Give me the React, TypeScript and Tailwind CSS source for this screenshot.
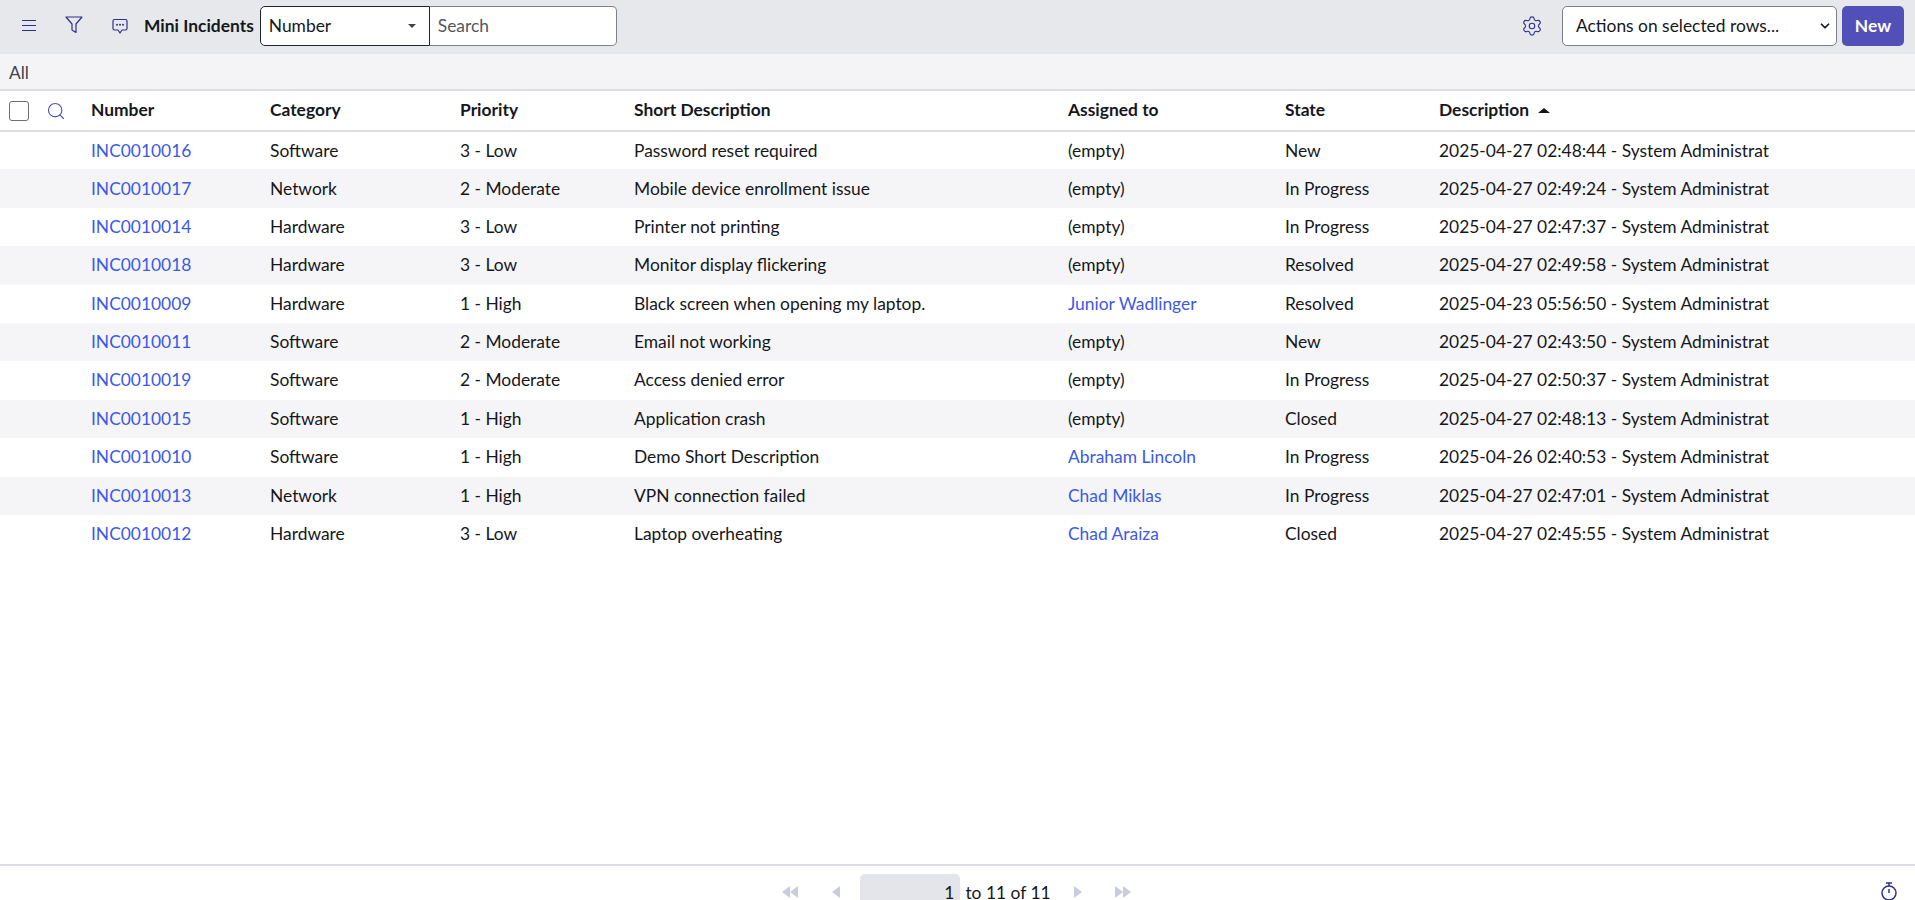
import { ChevronDown, Search, Settings } from 'lucide-react';

interface Incident {
  number: string;
  category: string;
  priority: string;
  short: string;
  assigned: string;
  state: string;
  description: string;
}

const incidents: Incident[] = [
  { number: 'INC0010016', category: 'Software', priority: '3 - Low', short: 'Password reset required', assigned: '', state: 'New', description: '2025-04-27 02:48:44 - System Administrat' },
  { number: 'INC0010017', category: 'Network', priority: '2 - Moderate', short: 'Mobile device enrollment issue', assigned: '', state: 'In Progress', description: '2025-04-27 02:49:24 - System Administrat' },
  { number: 'INC0010014', category: 'Hardware', priority: '3 - Low', short: 'Printer not printing', assigned: '', state: 'In Progress', description: '2025-04-27 02:47:37 - System Administrat' },
  { number: 'INC0010018', category: 'Hardware', priority: '3 - Low', short: 'Monitor display flickering', assigned: '', state: 'Resolved', description: '2025-04-27 02:49:58 - System Administrat' },
  { number: 'INC0010009', category: 'Hardware', priority: '1 - High', short: 'Black screen when opening my laptop.', assigned: 'Junior Wadlinger', state: 'Resolved', description: '2025-04-23 05:56:50 - System Administrat' },
  { number: 'INC0010011', category: 'Software', priority: '2 - Moderate', short: 'Email not working', assigned: '', state: 'New', description: '2025-04-27 02:43:50 - System Administrat' },
  { number: 'INC0010019', category: 'Software', priority: '2 - Moderate', short: 'Access denied error', assigned: '', state: 'In Progress', description: '2025-04-27 02:50:37 - System Administrat' },
  { number: 'INC0010015', category: 'Software', priority: '1 - High', short: 'Application crash', assigned: '', state: 'Closed', description: '2025-04-27 02:48:13 - System Administrat' },
  { number: 'INC0010010', category: 'Software', priority: '1 - High', short: 'Demo Short Description', assigned: 'Abraham Lincoln', state: 'In Progress', description: '2025-04-26 02:40:53 - System Administrat' },
  { number: 'INC0010013', category: 'Network', priority: '1 - High', short: 'VPN connection failed', assigned: 'Chad Miklas', state: 'In Progress', description: '2025-04-27 02:47:01 - System Administrat' },
  { number: 'INC0010012', category: 'Hardware', priority: '3 - Low', short: 'Laptop overheating', assigned: 'Chad Araiza', state: 'Closed', description: '2025-04-27 02:45:55 - System Administrat' },
];

const columns = ['Number', 'Category', 'Priority', 'Short Description', 'Assigned to', 'State'];

function Triangle({ dir }: { dir: 'left' | 'right' }) {
  return (
    <svg width="8" height="12" viewBox="0 0 8 12" className="fill-[#cbcbde]">
      <path d={dir === 'left' ? 'M8 0v12L0 6z' : 'M0 0v12l8-6z'} />
    </svg>
  );
}

export default function App() {
  return (
    <div className="flex h-screen flex-col overflow-hidden bg-white font-['Lato',sans-serif] text-[17.4px] text-[#15171c]">
      <header className="flex h-[54px] shrink-0 items-center bg-[#e6e8ec] pb-[2px] pr-[11px]">
        {/* menu */}
        <svg width="16" height="12" viewBox="0 0 16 12" className="ml-[21px] stroke-[#2e3192]" fill="none" strokeWidth="1.1">
          <path d="M1 .5h14M1 5.500h14M1 10.500h14" />
        </svg>
        {/* funnel */}
        <svg width="18" height="18" viewBox="0 0 18 18" className="ml-[28px] -translate-y-px stroke-[#2e3192]" fill="none" strokeWidth="1.2" strokeLinejoin="round">
          <path d="M1 1h16l-6 7v8.500l-4-2.500V8z" />
        </svg>
        {/* chat with dots */}
        <svg width="16" height="17" viewBox="0 0 16 17" className="ml-[29px]">
          <path d="M2.500 1.500h11a1.500 1.500 0 0 1 1.500 1.500v7.500a1.500 1.500 0 0 1-1.500 1.500H10l-2 3-2-3H2.500A1.500 1.500 0 0 1 1 10.500V3a1.500 1.500 0 0 1 1.500-1.500z" fill="none" stroke="#2e3192" strokeWidth="1.2" />
          <circle cx="5" cy="6.800" r="1" fill="#2e3192" />
          <circle cx="8" cy="6.800" r="1" fill="#2e3192" />
          <circle cx="11" cy="6.800" r="1" fill="#2e3192" />
        </svg>
        <span className="ml-[16px] font-bold">Mini Incidents</span>
        <div className="ml-[6px] flex h-10 w-[170px] items-center justify-between rounded-l-[5px] border border-[#1f2430] bg-white pl-2 pr-[13px]">
          <span>Number</span>
          <span className="h-0 w-0 border-x-[4px] border-t-[4px] border-x-transparent border-t-[#444]" />
        </div>
        <div className="flex h-10 w-[187px] items-center rounded-r-[5px] border border-l-0 border-[#7d808a] bg-white pl-2 text-[#54565f]">
          Search
        </div>
        <Settings className="ml-auto text-[#2e3192]" size={22} strokeWidth={1.25} />
        <div className="ml-[19px] flex h-10 w-[275px] items-center justify-between rounded-[5px] border border-[#7d808a] bg-white pl-[13px] pr-[4px]">
          <span>Actions on selected rows...</span>
          <ChevronDown size={14} strokeWidth={3} />
        </div>
        <button className="ml-[5px] h-10 w-[62px] rounded-[5px] bg-[#5050b8] font-bold text-white">New</button>
      </header>

      <div className="flex h-[37px] shrink-0 items-center border-b-2 border-[#dcdce4] bg-[#f4f4f6] pl-[9px] pt-[3px] text-[#3f4350]">All</div>

      <table className="w-full table-fixed border-collapse">
        <colgroup>
          <col className="w-[91px]" />
          <col className="w-[179px]" />
          <col className="w-[190px]" />
          <col className="w-[174px]" />
          <col className="w-[434px]" />
          <col className="w-[217px]" />
          <col className="w-[154px]" />
          <col />
        </colgroup>
        <thead>
          <tr className="h-[40px] border-b-2 border-[#dcdce4]">
            <th className="p-0">
              <div className="flex items-center">
                <span className="ml-[9px] h-[20px] w-[20px] rounded-[3px] border border-[#6b6e78] bg-white" />
                <Search className="ml-[17px] text-[#5050b8]" size={20} strokeWidth={1.4} />
              </div>
            </th>
            {columns.map((c) => (
              <th key={c} className="p-0 text-left font-bold">
                {c}
              </th>
            ))}
            <th className="p-0 text-left font-bold">
              <span className="flex items-center gap-[9px]">
                Description
                <span className="h-0 w-0 border-x-[6px] border-b-[5px] border-x-transparent border-b-[#15171c]" />
              </span>
            </th>
          </tr>
        </thead>
        <tbody>
          {incidents.map((row, i) => (
            <tr key={row.number} className={i % 2 === 1 ? 'h-[38.4px] bg-[#f5f5f7]' : 'h-[38.4px] bg-white'}>
              <td className="p-0" />
              <td className="p-0 text-[#3c59e7]">{row.number}</td>
              <td className="p-0">{row.category}</td>
              <td className="p-0">{row.priority}</td>
              <td className="p-0">{row.short}</td>
              <td className={row.assigned ? 'p-0 text-[#3c59e7]' : 'p-0'}>{row.assigned || '(empty)'}</td>
              <td className="p-0">{row.state}</td>
              <td className="p-0">{row.description}</td>
            </tr>
          ))}
        </tbody>
      </table>

      <footer className="relative mt-auto flex h-[36px] shrink-0 items-start justify-center border-t-2 border-[#dcdce4] pt-[8px]">
        <div className="flex items-start pr-[2px]">
          <div className="mt-[12px] flex">
            <Triangle dir="left" />
            <Triangle dir="left" />
          </div>
          <div className="ml-[34px] mt-[12px]">
            <Triangle dir="left" />
          </div>
          <div className="ml-[20px] flex h-[26px] w-[100px] justify-end rounded-t-[5px] bg-[#e4e5ea] pr-[6px] pt-[11px] leading-[15px]">1</div>
          <span className="ml-[5px] pt-[11px] leading-[15px]">to 11 of 11</span>
          <div className="ml-[23px] mt-[12px]">
            <Triangle dir="right" />
          </div>
          <div className="ml-[33px] mt-[12px] flex">
            <Triangle dir="right" />
            <Triangle dir="right" />
          </div>
        </div>
        {/* stopwatch */}
        <svg width="18" height="20" viewBox="0 0 18 20" className="absolute right-[17px] top-[16px]" fill="none" stroke="#2e3192" strokeWidth="1.5">
          <path d="M6 1h6M9 1v3M9 7v4" />
          <circle cx="9" cy="11" r="7" />
        </svg>
      </footer>
    </div>
  );
}
